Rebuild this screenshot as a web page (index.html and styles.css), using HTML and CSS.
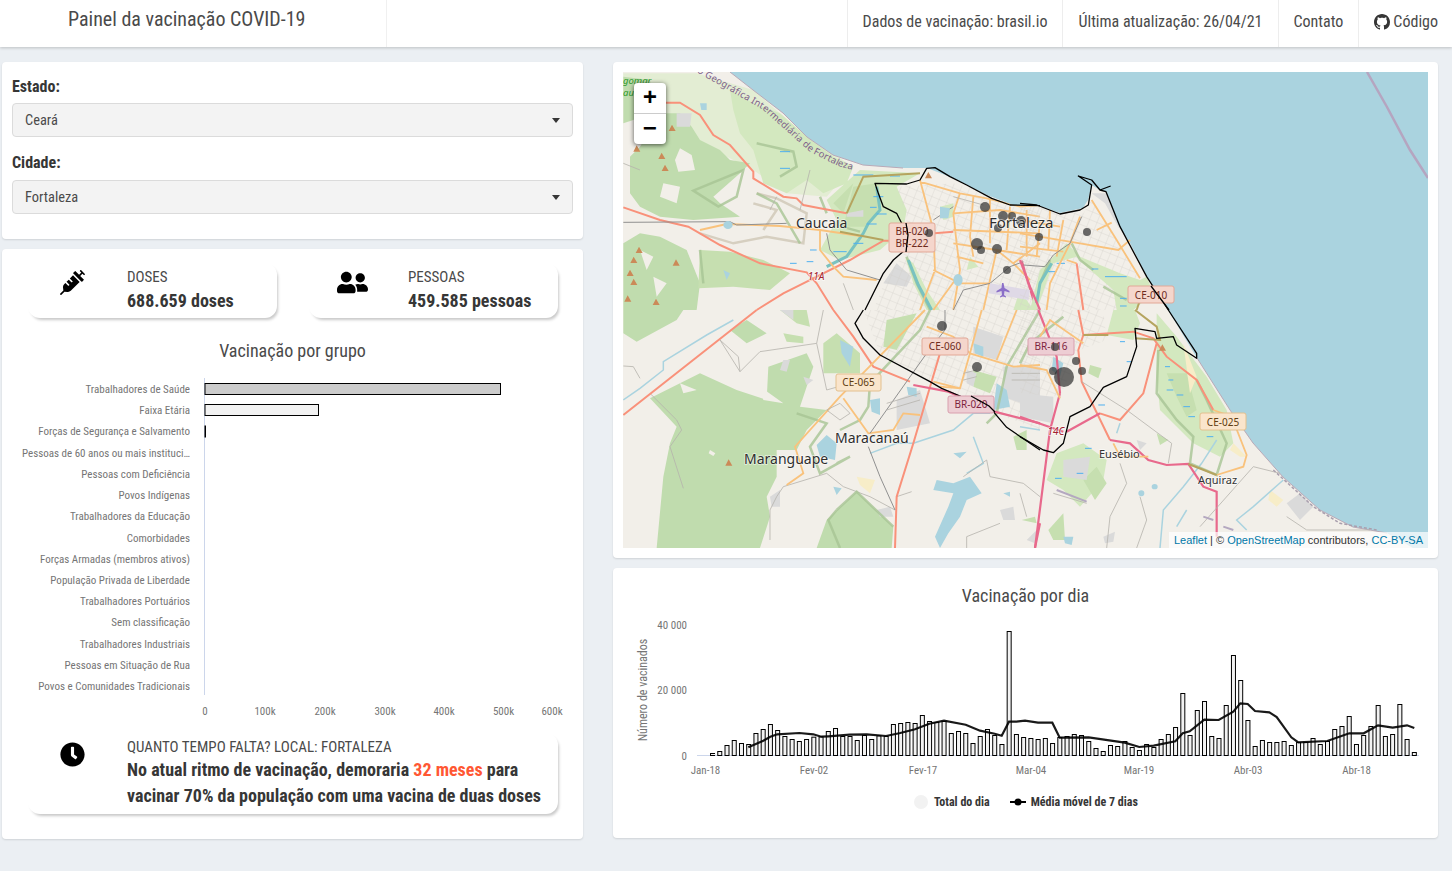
FILE: index.html
```html
<!DOCTYPE html>
<html lang="pt-BR">
<head>
    <meta charset="UTF-8">
    <meta name="viewport" content="width=device-width, initial-scale=1.0">
    <title>Painel da vacinação COVID-19</title>
    <link rel="stylesheet" href="styles.css">
</head>
<body>
    <header class="navbar">
        <div class="brand"><span>Painel da vacinação COVID-19</span></div>
        <nav class="nav-links">
            <a class="nav-item">Dados de vacinação: brasil.io</a>
            <a class="nav-item">Última atualização: 26/04/21</a>
            <a class="nav-item">Contato</a>
            <a class="nav-item nav-code">
                <svg class="icon-github" viewBox="0 0 16 16"><path d="M8 0C3.58 0 0 3.58 0 8c0 3.54 2.29 6.53 5.47 7.59.4.07.55-.17.55-.38 0-.19-.01-.82-.01-1.49-2.01.37-2.53-.49-2.69-.94-.09-.23-.48-.94-.82-1.13-.28-.15-.68-.52-.01-.53.63-.01 1.08.58 1.23.82.72 1.21 1.87.87 2.33.66.07-.52.28-.87.51-1.07-1.78-.2-3.64-.89-3.64-3.95 0-.87.31-1.59.82-2.15-.08-.2-.36-1.02.08-2.12 0 0 .67-.21 2.2.82.64-.18 1.32-.27 2-.27.68 0 1.36.09 2 .27 1.53-1.04 2.2-.82 2.2-.82.44 1.1.16 1.92.08 2.12.51.56.82 1.27.82 2.15 0 3.07-1.87 3.75-3.65 3.95.29.25.54.73.54 1.48 0 1.07-.01 1.93-.01 2.2 0 .21.15.46.55.38A8.013 8.013 0 0016 8c0-4.42-3.58-8-8-8z"/></svg>
                Código
            </a>
        </nav>
    </header>

    <main class="page">
        <div class="col">
            <section class="card filters">
                <label class="field-label" for="estado">Estado:</label>
                <div class="select"><select id="estado"><option>Ceará</option></select></div>
                <label class="field-label" for="cidade">Cidade:</label>
                <div class="select"><select id="cidade"><option>Fortaleza</option></select></div>
            </section>

            <section class="card summary">
                <div class="stats">
                    <div class="stat">
                        <div class="stat-icon">
                            <svg class="icon" viewBox="0 0 512 512"><path d="M201.5 174.8l55.7 55.8c3.1 3.1 3.1 8.2 0 11.3l-11.3 11.3c-3.1 3.1-8.2 3.1-11.3 0l-55.7-55.8-45.3 45.3 55.8 55.8c3.1 3.1 3.1 8.2 0 11.3l-11.3 11.3c-3.1 3.1-8.2 3.1-11.3 0L111 265.2l-26.4 26.4c-17.3 17.3-25.6 41.1-23 65.2l7.1 63.6L2.3 487c-3.1 3.1-3.1 8.2 0 11.3l11.3 11.3c3.1 3.1 8.2 3.1 11.3 0l66.3-66.3 63.7 7.1c23.9 2.6 47.9-5.4 65.2-23l181.9-181.9-135.7-135.7-64.9 65zm308.2-93.3L430.5 2.3c-3.1-3.1-8.2-3.1-11.3 0l-11.3 11.3c-3.1 3.1-3.1 8.2 0 11.3l28.3 28.3-45.3 45.3-56.6-56.6-17-17c-3.1-3.1-8.2-3.1-11.3 0l-33.9 33.9c-3.1 3.1-3.1 8.2 0 11.3l17 17L424.8 223l17 17c3.1 3.1 8.2 3.1 11.3 0l33.9-34c3.1-3.1 3.1-8.2 0-11.3l-73.5-73.5 45.3-45.3 28.3 28.3c3.1 3.1 8.2 3.1 11.3 0l11.3-11.3c3.1-3.2 3.1-8.2 0-11.4z"/></svg>
                        </div>
                        <div>
                            <p class="stat-title">DOSES</p>
                            <p class="stat-value">688.659 doses</p>
                        </div>
                    </div>
                    <div class="stat">
                        <div class="stat-icon">
                            <svg class="icon icon-wide" viewBox="0 0 640 512"><path d="M192 256c61.9 0 112-50.1 112-112S253.9 32 192 32 80 82.1 80 144s50.1 112 112 112zm76.8 32h-8.3c-20.8 10-43.9 16-68.5 16s-47.6-6-68.5-16h-8.3C51.6 288 0 339.6 0 403.2V432c0 26.5 21.5 48 48 48h288c26.5 0 48-21.5 48-48v-28.8c0-63.6-51.6-115.2-115.2-115.2zM480 256c53 0 96-43 96-96s-43-96-96-96-96 43-96 96 43 96 96 96zm48 32h-3.8c-13.9 4.8-28.6 8-44.2 8s-30.3-3.2-44.2-8H432c-20.4 0-39.2 5.9-55.7 15.4 24.4 26.3 39.7 61.2 39.7 99.8v38.4c0 2.2-.5 4.3-.6 6.4H592c26.5 0 48-21.5 48-48 0-61.9-50.1-112-112-112z"/></svg>
                        </div>
                        <div>
                            <p class="stat-title">PESSOAS</p>
                            <p class="stat-value">459.585 pessoas</p>
                        </div>
                    </div>
                </div>

                <h2 class="chart-title group-title">Vacinação por grupo</h2>
                <svg class="chart group-chart" width="581" height="353" id="group-chart"></svg>

                <div class="stat stat-wide">
                    <div class="stat-icon">
                        <svg class="icon" viewBox="0 0 512 512"><path d="M256,8C119,8,8,119,8,256S119,504,256,504,504,393,504,256,393,8,256,8Zm92.49,313h0l-20,25a16,16,0,0,1-22.49,2.5h0l-67-49.72a40,40,0,0,1-15-31.23V112a16,16,0,0,1,16-16h32a16,16,0,0,1,16,16V256l58,42.5A16,16,0,0,1,348.49,321Z"/></svg>
                    </div>
                    <div>
                        <p class="stat-title">QUANTO TEMPO FALTA? LOCAL: FORTALEZA</p>
                        <p class="stat-value stat-long">No atual ritmo de vacinação, demoraria <span class="highlight">32 meses</span> para vacinar 70% da população com uma vacina de duas doses</p>
                    </div>
                </div>
            </section>
        </div>

        <div class="col">
            <section class="card map-card">
                <div class="map">
                    <svg class="map-svg" width="805" height="476" viewBox="0 0 805 476">
                        <defs>
                            <pattern id="streets" width="24" height="24" patternUnits="userSpaceOnUse" patternTransform="rotate(22)">
                                <path d="M0 0H24M0 0V24" stroke="#d2cfc9" stroke-width="2" fill="none"/>
                            </pattern>
                        </defs>
                        <rect class="land" width="805" height="476"/>

                        <!-- noroeste -->
                        <g transform="translate(-3,-2) scale(.33333)">
                            <path class="meadow-light" d="M10 10L230 10 400 60 560 200 700 290 620 380 500 370 400 300 300 250 200 220 130 160 60 90 10 80Z"/>
                            <path class="forest" d="M30 260L60 230 90 180 120 130 180 130 215 170 240 210 300 240 330 270 390 280 360 310 280 380 300 400 360 440 220 450 120 440 60 410 30 370ZM10 520L60 490 120 500 200 540 240 640 230 720 10 720ZM10 20L90 30 100 100 40 150 10 160Z"/>
                            <path class="white-gap" d="M180 235L215 255 225 300 175 305 165 270ZM130 340L180 350 170 400 120 380ZM60 540L100 560 80 600ZM100 620L140 640 110 680Z"/>
                            <path class="park" d="M330 60L400 100 480 130 560 200 640 260 700 290 680 340 610 370 560 330 500 370 430 340 400 240 360 190 340 120ZM620 390L720 300 900 310 830 350 860 420 850 480 780 540 660 570 600 540 650 450Z"/>
                            <path class="meadow" d="M640 400L700 340 670 430ZM240 540L330 545 430 570 510 610 450 660 340 650 235 655ZM330 590L380 565 390 590ZM700 350L770 340 780 410 740 470 670 470Z"/>
                            <path class="urban" d="M790 640L830 580 875 620 860 650ZM680 430L730 420 730 440 680 440ZM170 130L215 130 210 170 170 170Z"/>
                            <path class="streets" d="M830 350L1000 340 1260 400 1260 720 760 720 800 620 860 540 860 440Z"/>
                            <path class="park" d="M855 560L880 580 920 660 960 720 920 720 880 640ZM960 410L1000 400 1000 440 970 450ZM1050 560L1075 590 1040 600ZM1200 660L1240 720 1180 720Z"/>
                            <path class="blocks" d="M410 370L470 385 560 430 550 520 440 500 340 520 240 490M400 400L470 420 430 480"/>
                            <path class="prot" d="M220 362L370 300 350 380 295 410ZM410 220L520 245 530 290 480 320M240 540L250 640M410 370L470 400 540 520M600 380L620 430M665 470L720 485M860 560L890 640 930 720"/>
                            <path class="river" d="M770 350L780 420 745 460 730 490 680 560 620 590M865 570L895 645 935 720"/>
                            <path class="dash" d="M480 245H510M480 295H510M700 315H760M810 318H840M760 380H790M750 412H770M770 432H800M740 462H770M700 520H730M640 545H680M510 580H530M570 540H590M560 575H580"/>
                            <path class="trunk" d="M135 98L180 98 240 135 280 195 330 225 400 305 400 325 490 380 530 385 550 405 600 415 680 430M10 412L120 450 205 470 300 525 420 580 560 607 590 640 640 720M410 720L490 670 580 625 690 570 790 512 806 512M944 490L1000 485"/>
                            <path class="primary" d="M240 480L320 462 480 468 600 480 720 498M600 480L600 540 640 590 670 620 770 630M900 330L940 480 945 600 900 720M900 335L1020 370 1100 385 1200 410 1260 405M1020 370L1000 430 1010 520 1020 600 1000 720M1000 430L1140 420 1260 440M1000 480L1260 490M1000 520L1130 540 1260 560M1130 540L1110 630 1090 720M1130 540L1180 580 1230 630M940 600L1020 640 1110 640M1260 520L1180 580M1060 380L1050 500 1060 560M1110 390L1110 520M1170 410L1160 540M1220 420L1220 560M1010 560L1090 580M1020 610L940 720"/>
                            <path class="prot-road" d="M680 430L730 320 900 310M660 485L790 510"/>
                            <path class="motorway" d="M1205 572L1225 640 1250 720"/>
                            <path class="rail" d="M10 457L330 455 350 465 500 460M620 490L630 540 680 600 780 630M1110 640L1170 590 1210 575M1000 410L940 450M1000 720L1030 660 1110 640"/>
                            <path class="minor" d="M10 280L60 300M570 300L540 420M670 640L700 720M450 420L470 380M1000 380L1090 405"/>
                            <path class="lake" d="M310 465a14 12 0 1 0 28 0a14 12 0 1 0 -28 0ZM1000 630a14 18 0 1 0 28 0a14 18 0 1 0 -28 0ZM240 100l20 0 0 20-16 0ZM310 600l20 10-10 20ZM960 410l30 5-5 30-25 0Z"/>
                            <path class="airport" d="M1110 640L1230 660 1225 690 1105 670Z"/>
                            <path class="peak" d="M146 183l10-19 11 19ZM40 245l10-19 11 19ZM115 267l10-19 11 19ZM125 303l10-19 11 19ZM47 549l10-19 11 19ZM31 579l10-19 11 19ZM158 587l10-19 11 19ZM20 618l10-19 11 19ZM31 645l10-19 11 19ZM13 695l10-19 11 19ZM98 705l10-19 11 19ZM915 325l10-19 11 19Z"/>
                        </g>

                        <!-- nordeste e oceano -->
                        <path class="sea" d="M107 0L130 18 160 41 184 65 210 83 240 93 280 96 304 96 330 106 364 123 390 133 414 133 437 141 460 136 465 128 469 113 455 105 477 118 483 120 494 151 507 171 524 205 545 238 574 286 607 338 630 371 660 405 697 438 730 455 764 461 790 476 805 476 805 0Z"/>
                        <path class="sea-limit" d="M744 0L764 35 787 78 805 106"/>
                        <path class="coast" d="M107 0L130 18 160 41 184 65 210 83 240 93 280 96M574 286L607 338 630 371 660 405 697 438 730 455 764 461"/>
                        <g transform="translate(397,-2) scale(.33333)">
                            <path class="streets" d="M0 405L190 430 215 390 290 510 360 625 340 720 0 720Z"/>
                            <path class="urban" d="M215 370L260 370 300 480 255 400Z"/>
                            <path class="park" d="M140 520L180 560 300 610 360 630 380 620 400 670 340 720 290 720 280 660 200 590 170 560 100 580 50 720 30 720 60 600Z"/>
                            <path class="prot" d="M155 520L180 570 220 600M250 650L320 690M90 570L60 640"/>
                            <path class="river" d="M95 580L60 640 50 700"/>
                            <path class="dash" d="M110 580H135M85 605H110M215 597H235M255 620H320M300 685H320M300 708H320"/>
                            <path class="primary" d="M215 390L290 510 360 625M0 450L120 470M0 490L180 520 295 540 330 510M130 450L110 560M60 450L50 560M180 440L150 520 90 640 80 720M230 480L275 458M140 570L170 580M90 420L85 540M0 530L130 545"/>
                            <path class="rail" d="M185 440L150 520 100 555 75 590 10 585"/>
                            <path class="trunk" d="M170 580L190 720"/>
                            <path class="motorway" d="M0 570L30 650 60 720"/>
                            <path class="prot-road" d="M370 660L350 720"/>
                        </g>

                        <!-- sudoeste -->
                        <g transform="translate(-3,238) scale(.33333)">
                            <path class="streets" d="M730 0L1260 0 1260 360 1100 300 920 210 780 130Z"/>
                            <path class="forest" d="M90 265L240 190 350 240 440 270 445 170 560 130 580 170 540 290 620 300 560 360 530 420 470 420 470 500 440 560 450 620 420 714 110 714 130 500 150 400 170 350ZM10 0L190 0 170 30 50 95 10 70ZM330 60L380 30 440 70 380 100ZM620 630L710 545 820 650 815 714 590 714Z"/>
                            <path class="meadow" d="M490 70L550 80 550 100 500 95ZM610 100L650 70 720 130 720 190 610 190ZM480 0L560 0 570 50 530 40ZM1180 380L1220 360 1220 420 1190 420ZM1060 180L1130 200 1110 250 1060 230ZM800 30L890 10 830 120 790 110Z"/>
                            <path class="white-gap" d="M180 220L230 240 190 250ZM270 420l16 10-6 8-14-8ZM420 230L490 280 430 270Z"/>
                            <path class="urban" d="M830 270L900 240 930 340 830 360ZM1060 50L1150 80 1130 150 1060 130ZM1150 170L1260 170 1260 300 1150 260ZM1040 180L1070 190 1060 230 1040 220ZM450 560L480 540 480 590 455 590ZM1140 600L1180 590 1185 630 1150 630ZM770 600L810 590 820 620 780 620ZM480 0L520 0 520 30ZM550 200L580 210 560 225ZM490 150L510 150 500 185 480 180Z"/>
                            <path class="sand" d="M710 500L765 510 750 550 720 525Z"/>
                            <path class="lake" d="M590 405L620 375 650 400 645 450 600 440ZM750 270L780 265 780 315 755 305ZM860 230L890 235 890 260 865 255ZM1130 220L1160 240 1170 290 1120 300ZM950 510L1000 520 1050 500 1085 550 1040 570 1020 620 985 670 960 714 945 680 985 590 1000 550 940 540ZM660 90L700 110 690 170 665 130ZM640 530L665 535 650 555ZM1000 430L1040 425 1020 445ZM1150 550L1170 545 1170 560ZM1060 100L1090 110 1090 140 1065 130Z"/>
                            <path class="river-thin" d="M10 270L60 235 130 180 130 155 260 75 340 30M880 400L1000 360 1060 310 1110 310M750 430L830 400 880 400M1040 490L1090 460 1060 380"/>
                            <path class="minor" d="M10 168L40 170 60 205M300 90L360 185 420 125 590 100 610 0M590 100L620 240 690 220M300 90L355 140 360 185M90 250L170 330 185 360 150 410 190 535M450 600L470 560 490 530 620 490 670 530 750 560 825 600M450 600L450 690M1100 450L1110 500 1210 520 1260 560M1040 714L1040 680 1140 640M875 545L830 560M1030 500L1100 450"/>
                            <path class="prot" d="M530 310L620 340 570 410 600 490 690 440 650 460M650 600L710 545 820 650M650 600L625 630 660 714M660 360L720 330 745 290 750 220 900 60 930 0M1100 340L1130 310 1160 170 1260 0"/>
                            <path class="trunk" d="M10 315L410 0M640 0L700 80 760 170 870 215M960 130L880 400 830 560 825 714"/>
                            <path class="primary" d="M915 0L660 260 525 410 550 490 500 525M670 265L745 370 820 360 850 310 900 315M960 230L1020 235 1050 130 1085 0M920 50L1000 80 1050 130 1180 170 1260 165M940 215L1020 235M1190 0L1130 150"/>
                            <path class="motorway" d="M880 225L985 245 1123 305 1260 340M1260 640L1245 714"/>
                            <path class="rail" d="M750 370L920 130 975 60 975 0M745 410L780 500 825 600"/>
                            <path class="street-lines" d="M620 300L660 280 690 310 660 330ZM1030 190L1070 180M1030 210L1070 200M1175 190L1260 190M1175 210L1260 210M800 280L900 250M800 300L900 270"/>
                            <path class="peak" d="M316 467l10-19 11 19Z"/>
                        </g>

                        <!-- sudeste -->
                        <g transform="translate(397,238) scale(.33333)">
                            <path class="streets" d="M0 0L250 0 260 90 180 120 120 260 0 250Z"/>
                            <path class="park" d="M280 0L345 0 360 40 340 90 260 75ZM410 10L470 80 560 200 620 300 640 400 600 440 520 400 420 300 410 200ZM110 430L190 400 260 450 250 510 180 590 130 540 80 510Z"/>
                            <path class="meadow" d="M440 190L500 190 530 300 500 320 470 260ZM190 510L230 470 260 520 225 570ZM85 660L130 610 135 690 100 690ZM5 630L45 620 50 640ZM410 370L445 390 420 405ZM210 165L245 175 235 205 205 190Z"/>
                            <path class="sand" d="M490 100L530 200 510 250ZM640 400L680 440 660 440 630 420ZM750 540L790 570 770 590 745 570Z"/>
                            <path class="urban" d="M800 580L840 550 880 590 840 630ZM130 450L210 440 200 510 130 500ZM250 680L285 665 280 695 255 700ZM0 250L100 260 100 340 0 320ZM350 390L380 400 360 420ZM20 690L50 660 45 700Z"/>
                            <path class="lake" d="M395 530a9 8 0 1 0 18 0a9 8 0 1 0 -18 0ZM355 550a9 9 0 1 0 18 0a9 9 0 1 0 -18 0ZM130 680L160 680 155 705 135 700ZM100 140L130 160 120 200 95 180Z"/>
                            <path class="river-thin" d="M590 390L545 460 490 530 430 600 420 714M790 510L700 590 650 630 680 660M500 600L470 650M300 340L290 370M0 350L60 360"/>
                            <path class="prot" d="M415 120L410 250 470 330 520 380 510 460 590 495 620 400 560 270 530 210M130 20L30 100 0 160"/>
                            <path class="dash" d="M300 95H315M320 155H335M435 170H450M445 210H460M440 240H460M470 255H490M490 290H510M505 320H525M560 380H580M195 415H215M170 490H190M105 505H125M235 285H255"/>
                            <path class="trunk" d="M175 0L190 75 175 120 185 215 270 390M190 75L340 65 400 85 440 140 530 210 580 300M410 100L370 250 300 330 240 310"/>
                            <path class="motorway" d="M0 320L130 365M120 250L90 360 45 714M55 0L110 140 120 250M270 390L330 400 385 450 440 465 505 462 550 530 590 545 590 680M140 365L240 310"/>
                            <path class="primary" d="M635 320L680 435 670 470 590 495M0 165L80 180 120 265M190 100L90 30 60 80M280 400L300 440 385 440M580 300L635 320"/>
                            <path class="prot-road" d="M190 75L265 75M345 0L410 50 420 90 345 85M505 462L590 495"/>
                            <path class="minor" d="M320 300L455 400 445 460M300 460L320 520 270 620 260 714M540 650L700 470 780 490M100 550L200 580M800 620L860 660 1050 660M0 550L20 620M360 560L380 630 350 714M185 215L320 300"/>
                            <path class="rail-purple" d="M110 540L200 575M550 620L580 630M610 650L640 660"/>
                            <path class="coast-sw" d="M760 480L880 590 960 640 1070 660"/>
                            <path class="peak" d="M417 122l10-19 11 19Z"/>
                        </g>

                        <!-- limite do município -->
                        <g transform="translate(-3,-2) scale(.33333)"><path class="muni" d="M735 720L760 670 790 610 820 570 855 540 860 490 830 430 790 410 775 370 765 340 860 342 900 330 920 295 945 293 990 320 1040 345 1115 385 1170 405 1260 407"/></g>
                        <g transform="translate(397,-2) scale(.33333)"><path class="muni" d="M0 400L50 405 120 432 180 420 205 405 215 345 175 318 215 330 240 360 272 348M240 360L258 365 300 470 380 620 445 720"/></g>
                        <g transform="translate(397,238) scale(.33333)"><path class="muni" d="M445 0L530 130 530 145 470 105 460 80 410 85 405 65 345 55 350 110 320 200 250 232 210 290 150 320 130 400 100 428 70 420 0 380"/></g>
                        <g transform="translate(-3,238) scale(.33333)"><path class="muni" d="M1260 420L1160 352 1120 305 1020 258 965 235 930 215 780 135 730 85 705 40 730 0"/></g>

                        <!-- pontos de vacinação -->
                        <g class="dots">
                            <circle cx="362" cy="135" r="5"/><circle cx="380" cy="144" r="5"/><circle cx="389" cy="144" r="4"/><circle cx="398" cy="149" r="5"/><circle cx="375" cy="156" r="4"/><circle cx="354" cy="172" r="6"/><circle cx="358" cy="178" r="4"/><circle cx="374" cy="177" r="5"/><circle cx="384" cy="198" r="4"/><circle cx="464" cy="160" r="4"/><circle cx="416" cy="165" r="4"/><circle cx="319" cy="254" r="5"/><circle cx="354" cy="295" r="5"/><circle cx="453" cy="289" r="4"/><circle cx="430" cy="299" r="4"/><circle cx="459" cy="299" r="4"/><circle cx="441" cy="305" r="10"/>
                        </g>

                        <!-- nomes -->
                        <path id="coast-label" class="none" d="M62 -8L77 2 139 37 187 80 215 94 260 106"/>
                        <text class="boundary-label"><textPath href="#coast-label">gião Geográfica Intermediária de Fortaleza</textPath></text>
                        <text class="hamlet" x="0" y="12">gomar</text>
                        <text class="hamlet" x="0" y="24">auí</text>
                        <text class="city" x="173" y="156">Caucaia</text>
                        <text class="city city-big" x="366" y="156">Fortaleza</text>
                        <text class="city" x="212" y="371">Maracanaú</text>
                        <text class="city" x="121" y="392">Maranguape</text>
                        <text class="town" x="476" y="386">Eusébio</text>
                        <text class="town" x="575" y="412">Aquiraz</text>
                        <text class="ref" x="193" y="208">11A</text>
                        <text class="ref" x="433" y="363">14C</text>

                        <rect class="shield trunk-shield" x="266" y="151" width="46" height="29" rx="2"/>
                        <text class="shield-text trunk-text" x="289" y="163">BR-020</text>
                        <text class="shield-text trunk-text" x="289" y="175">BR-222</text>
                        <rect class="shield trunk-shield" x="299" y="266" width="46" height="17" rx="2"/>
                        <text class="shield-text trunk-text" x="322" y="278">CE-060</text>
                        <rect class="shield primary-shield" x="213" y="302" width="45" height="17" rx="2"/>
                        <text class="shield-text primary-text" x="235.500" y="314">CE-065</text>
                        <rect class="shield motorway-shield" x="325" y="324" width="46" height="17" rx="2"/>
                        <text class="shield-text motorway-text" x="348" y="336">BR-020</text>
                        <rect class="shield motorway-shield" x="405" y="266" width="46" height="17" rx="2"/>
                        <text class="shield-text motorway-text" x="428" y="278">BR-116</text>
                        <rect class="shield trunk-shield" x="505" y="214" width="46" height="17" rx="2"/>
                        <text class="shield-text trunk-text" x="528" y="227">CE-010</text>
                        <rect class="shield primary-shield" x="577" y="341" width="46" height="17" rx="2"/>
                        <text class="shield-text primary-text" x="600" y="354">CE-025</text>

                        <!-- por cima das placas -->
                        <g class="dots">
                            <circle cx="306" cy="161" r="4"/><circle cx="432" cy="275" r="4"/>
                        </g>
                        <path class="muni-top" d="M283 151L285 163 283 180M348 324L366 334 372 340M528 214L546 238"/>
                        <path class="plane" d="M379 211l1.500 0 1 5 5 3 0 1.500-5-1.500-.5 4 2 1.500 0 1-3-1-3 1 0-1 2-1.500-.5-4-5 1.500 0-1.500 5-3Z"/>
                    </svg>
                    <div class="zoom-control">
                        <a class="zoom-btn">+</a>
                        <a class="zoom-btn">−</a>
                    </div>
                    <div class="attribution"><a>Leaflet</a> | © <a>OpenStreetMap</a> contributors, <a>CC-BY-SA</a></div>
                </div>
            </section>

            <section class="card daily">
                <h2 class="chart-title">Vacinação por dia</h2>
                <svg class="chart" width="825" height="170" id="daily-chart"></svg>
                <div class="legend">
                    <span class="legend-dot"></span><span class="legend-label">Total do dia</span>
                    <svg class="legend-line" width="16" height="10" viewBox="0 0 16 10"><path d="M0 5H16" stroke="#000" stroke-width="2"/><circle cx="8" cy="5" r="3.500"/></svg>
                    <span class="legend-label">Média móvel de 7 dias</span>
                </div>
            </section>
        </div>
    </main>

    <script>
        const NS = 'http://www.w3.org/2000/svg';

        function add(svg, tag, attrs, text) {
            const el = document.createElementNS(NS, tag);
            Object.keys(attrs).forEach(k => el.setAttribute(k, attrs[k]));
            if (text) el.textContent = text;
            svg.appendChild(el);
        }

        // Vacinação por grupo
        const groups = ['Trabalhadores de Saúde', 'Faixa Etária', 'Forças de Segurança e Salvamento', 'Pessoas de 60 anos ou mais instituci…', 'Pessoas com Deficiência', 'Povos Indígenas', 'Trabalhadores da Educação', 'Comorbidades', 'Forças Armadas (membros ativos)', 'População Privada de Liberdade', 'Trabalhadores Portuários', 'Sem classificação', 'Trabalhadores Industriais', 'Pessoas em Situação de Rua', 'Povos e Comunidades Tradicionais'];
        const groupSvg = document.getElementById('group-chart');
        groups.forEach((g, i) => {
            add(groupSvg, 'text', { class: 'tick', x: 188, y: 21 + i * 21.22, 'text-anchor': 'end' }, g);
        });
        add(groupSvg, 'path', { d: 'M202.500 6V323', class: 'axis' });
        add(groupSvg, 'rect', { x: 203, y: 11.500, width: 295.500, height: 11, fill: '#ccc', class: 'bar' });
        add(groupSvg, 'rect', { x: 203, y: 32.500, width: 113.500, height: 11, fill: '#f2f2f2', class: 'bar' });
        add(groupSvg, 'rect', { x: 203, y: 54, width: 0.500, height: 11, fill: '#f2f2f2', class: 'bar' });
        [[203, '0'], [263, '100k'], [323, '200k'], [383, '300k'], [442, '400k'], [501.500, '500k'], [550, '600k']].forEach(t => {
            add(groupSvg, 'text', { class: 'tick', x: t[0], y: 343, 'text-anchor': 'middle' }, t[1]);
        });

        // Vacinação por dia: altura das barras em pixels * 3
        const tops = [556, 550, 544, 526, 511, 520, 523, 490, 478, 463, 481, 499, 508, 514, 508, 501, 500, 484, 475, 499, 499, 511, 496, 508, 497, 499, 463, 460, 457, 460, 436, 454, 457, 454, 490, 484, 490, 520, 499, 478, 496, 523, 184, 493, 502, 505, 508, 505, 520, 502, 499, 493, 496, 514, 535, 544, 526, 529, 514, 532, 541, 523, 532, 508, 493, 472, 370, 496, 421, 394, 499, 505, 406, 256, 331, 451, 529, 511, 517, 517, 514, 526, 517, 517, 505, 523, 514, 478, 469, 439, 523, 496, 469, 406, 499, 493, 403, 508, 547];
        const avg = [[385, 532], [430, 512], [451, 500], [472, 493], [538, 489], [580, 493], [604, 500], [625, 499], [689, 494], [740, 493], [798, 498], [841, 489], [885, 478], [928, 461], [972, 452], [1037, 464], [1080, 482], [1124, 491], [1145, 497], [1167, 455], [1189, 455], [1215, 452], [1254, 458], [1297, 458], [1319, 503], [1406, 502], [1514, 518], [1558, 531], [1601, 527], [1666, 514], [1688, 490], [1709, 484], [1753, 449], [1796, 450], [1840, 425], [1861, 400], [1883, 402], [1905, 423], [1948, 427], [1970, 441], [2014, 502], [2035, 517], [2122, 513], [2188, 490], [2231, 490], [2274, 466], [2318, 473], [2361, 466], [2383, 474]];
        const dailySvg = document.getElementById('daily-chart');
        const base = 145.500;

        add(dailySvg, 'path', { d: 'M84 145.500H806', class: 'axis' });
        tops.forEach((z, i) => {
            const h = (556 - z) / 3;
            if (h > 0) add(dailySvg, 'rect', { x: 92.300 + i * 7.235 - 2, y: base - h, width: 4, height: h, fill: '#f2f2f2', class: 'bar' });
        });
        add(dailySvg, 'polyline', {
            class: 'trend',
            points: avg.map(p => (7 + p[0] / 3).toFixed(1) + ',' + (-40 + p[1] / 3).toFixed(1)).join(' ')
        });
        [[14.500, '40 000'], [79.500, '20 000'], [146, '0']].forEach(t => {
            add(dailySvg, 'text', { class: 'tick', x: 74, y: t[0] + 4, 'text-anchor': 'end' }, t[1]);
        });
        [[92.500, 'Jan-18'], [201, 'Fev-02'], [310, 'Fev-17'], [418, 'Mar-04'], [526, 'Mar-19'], [635, 'Abr-03'], [743.500, 'Abr-18']].forEach(t => {
            add(dailySvg, 'text', { class: 'tick', x: t[0], y: 164, 'text-anchor': 'middle' }, t[1]);
        });
        add(dailySvg, 'text', { class: 'tick axis-name', transform: 'translate(34,80) rotate(-90)', 'text-anchor': 'middle' }, 'Número de vacinados');
    </script>
</body>
</html>
```

FILE: styles.css
```css
:root { --page-bg: #ebeff3; --text: #363636; --nav-text: #4a4a4a; }
* { box-sizing: border-box; }
body { margin: 0; font-family: Roboto, sans-serif; font-stretch: 75%; background-color: var(--page-bg); color: var(--nav-text); height: 871px; overflow: hidden; }
p, h2 { margin: 0; }

.navbar { display: flex; height: 47px; background-color: #fff; box-shadow: 0 1px 3px rgba(0,0,0,.2); position: relative; }
.brand { width: 387px; padding: 7px 0 0 68px; font-size: 20px; line-height: 24px; border-right: 1px solid #f0f0f0; color: var(--nav-text); }
.nav-links { display: flex; margin-left: auto; }
.nav-item { display: flex; align-items: center; gap: 3px; padding: 0 15px 4px; font-size: 16px; border-left: 1px solid #ededed; white-space: nowrap; }
.nav-code { padding-right: 14px; }
.icon-github { width: 16px; height: 16px; fill: #363636; }

.page { display: grid; grid-template-columns: 581px 825px; column-gap: 30px; padding: 15px 0 0 2px; }
.col { display: flex; flex-direction: column; gap: 10px; }
.card { background-color: #fff; border-radius: 4px; box-shadow: 0 1px 2px rgba(0,0,0,.12); }

.filters { height: 177px; padding: 15px 10px 0; }
.field-label { display: block; font-size: 16px; line-height: 20px; font-weight: 700; color: var(--text); margin-bottom: 6px; }
.select + .field-label { margin-bottom: 7px; }
.select { position: relative; height: 34px; margin-bottom: 16px; }
.select::after { content: ""; position: absolute; right: 13px; top: 15px; border: 4.500px solid transparent; border-top: 5px solid #363636; border-bottom: 0; }
.select select { appearance: none; width: 100%; height: 34px; padding: 0 12px; background-color: #f3f3f3; border: 1px solid #dbdbdb; border-radius: 4px; font-family: inherit; font-stretch: 75%; font-size: 14.400px; color: #4a4a4a; }

.summary { height: 590px; padding-top: 14px; }
.stats { display: flex; gap: 32px; padding-left: 26px; }
.stat { display: flex; width: 249px; height: 55px; border-radius: 12px; background-color: #fff; box-shadow: 2px 3px 3px -1px rgba(0,0,0,.22); }
.stat-icon { width: 99px; padding: 7px 0 0 32px; flex-shrink: 0; }
.icon { display: block; width: 25px; height: 25px; fill: #000; }
.icon-wide { width: 31px; margin-left: -4px; }
.stat-title { font-size: 15px; line-height: 19px; padding-top: 5px; }
.stat-value { font-size: 18px; line-height: 26px; font-weight: 700; color: var(--text); padding-top: 1px; }
.stat-wide { width: 530px; height: 81px; margin: 8px 0 0 26px; }
.stat-wide .stat-icon { padding-top: 9px; }
.stat-long { padding-top: 0; }
.highlight { color: #ff5733; }

.chart-title { font-size: 18px; line-height: 22px; font-weight: 400; text-align: center; color: var(--nav-text); }
.group-title { margin: 22px 0 10px; }
.chart { display: block; }
.tick { font-size: 11px; fill: #757575; }
.axis-name { font-size: 12px; }
.axis { stroke: #ccd6eb; stroke-width: 1; fill: none; }
.bar { stroke: #000; stroke-width: 1; }
.trend { fill: none; stroke: #000; stroke-width: 2.200; opacity: .9; }

.map-card { height: 496px; padding: 10px; }
.map { position: relative; width: 805px; height: 476px; overflow: hidden; }
.map-svg { display: block; }
.map-svg path { vector-effect: non-scaling-stroke; }
.land { fill: #f2efe9; }
.sea { fill: #aad3df; }
.sea-limit { fill: none; stroke: #b5a5c0; stroke-width: 2.500; }
.coast { fill: none; stroke: #b9aab8; stroke-width: 1; }
.coast-sw { fill: none; stroke: #a99fae; stroke-width: 1.500; stroke-dasharray: 3 2; }
.forest { fill: #c0dcae; }
.park { fill: #d3e8bf; }
.meadow { fill: #c6dfb0; }
.meadow-light { fill: #e3edd3; }
.urban { fill: #dadada; }
.sand { fill: #f7edc8; }
.lake { fill: #aad3df; }
.white-gap { fill: #f2efe9; }
.airport { fill: #dfd9e6; }
.streets { fill: url(#streets); }
.blocks { fill: none; stroke: #d6cfc0; stroke-width: 2.500; }
.prot { fill: none; stroke: #a8c595; stroke-width: 2.500; opacity: .8; }
.river { fill: none; stroke: #79c2c0; stroke-width: 3; }
.river-thin { fill: none; stroke: #aad3df; stroke-width: 1.500; }
.dash { fill: none; stroke: #4fb0f0; stroke-width: 1; }
.trunk { fill: none; stroke: #f9917a; stroke-width: 2; }
.primary { fill: none; stroke: #f9c27c; stroke-width: 1.800; }
.prot-road { fill: none; stroke: #b5a45f; stroke-width: 2; }
.motorway { fill: none; stroke: #e8698c; stroke-width: 2.200; }
.rail { fill: none; stroke: #909090; stroke-width: 1; }
.rail-purple { fill: none; stroke: #b4a8c0; stroke-width: 2; }
.minor { fill: none; stroke: #b5b2ac; stroke-width: .8; }
.street-lines { fill: none; stroke: #b5b2ac; stroke-width: .8; }
.peak { fill: #cb8a58; }
.muni { fill: none; stroke: #000; stroke-width: 1.300; stroke-linejoin: round; }
.muni-top { fill: none; stroke: #000; stroke-width: 1.300; }
.dots circle { fill: #333; opacity: .72; }
.none { fill: none; }
.plane { fill: #8b6fc8; }
.city { font-family: "Noto Sans", sans-serif; font-stretch: normal; font-size: 14px; fill: #2e2e2e; paint-order: stroke; stroke: rgba(255,255,255,.6); stroke-width: 1.500px; }
.city-big { font-size: 15px; }
.town { font-family: "Noto Sans", sans-serif; font-stretch: normal; font-size: 11px; fill: #333; paint-order: stroke; stroke: rgba(255,255,255,.6); stroke-width: 1.500px; }
.hamlet { font-family: "Noto Sans", sans-serif; font-stretch: normal; font-size: 9.500px; font-style: italic; fill: #2c9a2c; }
.ref { font-family: "Noto Sans", sans-serif; font-stretch: normal; font-size: 10px; font-style: italic; fill: #a3232f; text-anchor: middle; paint-order: stroke; stroke: rgba(255,255,255,.7); stroke-width: 1.500px; }
.boundary-label { font-family: "Noto Sans", sans-serif; font-stretch: normal; font-size: 9.500px; fill: #7e5f8a; letter-spacing: .2px; }
.shield { stroke-width: 1; }
.trunk-shield { fill: #f5d6cc; stroke: #e2a897; }
.primary-shield { fill: #fae5cc; stroke: #e3c08e; }
.motorway-shield { fill: #edcdd3; stroke: #d99fae; }
.shield-text { font-family: "Noto Sans", sans-serif; font-stretch: normal; font-size: 10px; text-anchor: middle; }
.trunk-text { fill: #6e2c1e; }
.primary-text { fill: #5e3c10; }
.motorway-text { fill: #7d1f3e; }

.zoom-control { position: absolute; left: 11px; top: 11px; width: 32px; border-radius: 4px; background-color: #fff; box-shadow: 0 1px 5px rgba(0,0,0,.65); }
.zoom-btn { display: block; height: 30px; font-family: "Liberation Mono", monospace; font-stretch: normal; font-weight: 700; font-size: 24px; line-height: 32px; text-align: center; color: #000; }
.zoom-btn + .zoom-btn { height: 31px; border-top: 1px solid #ccc; }
.attribution { position: absolute; right: 0; bottom: 0; padding: 0 5px; height: 16px; font-family: "Liberation Sans", Arial, sans-serif; font-stretch: normal; font-size: 11px; line-height: 16px; color: #333; background-color: rgba(255,255,255,.7); }
.attribution a { color: #0078a8; }

.daily { height: 270px; padding-top: 17px; }
.daily .chart { margin-top: 3px; }
.legend { display: flex; align-items: center; padding: 13px 0 0 301px; height: 31px; }
.legend-dot { width: 14px; height: 14px; margin-right: 6px; border-radius: 50%; background-color: #f2f2f2; }
.legend-label { font-size: 12px; font-weight: 700; color: var(--text); }
.legend-line { margin: 0 5px 0 20px; }
```
